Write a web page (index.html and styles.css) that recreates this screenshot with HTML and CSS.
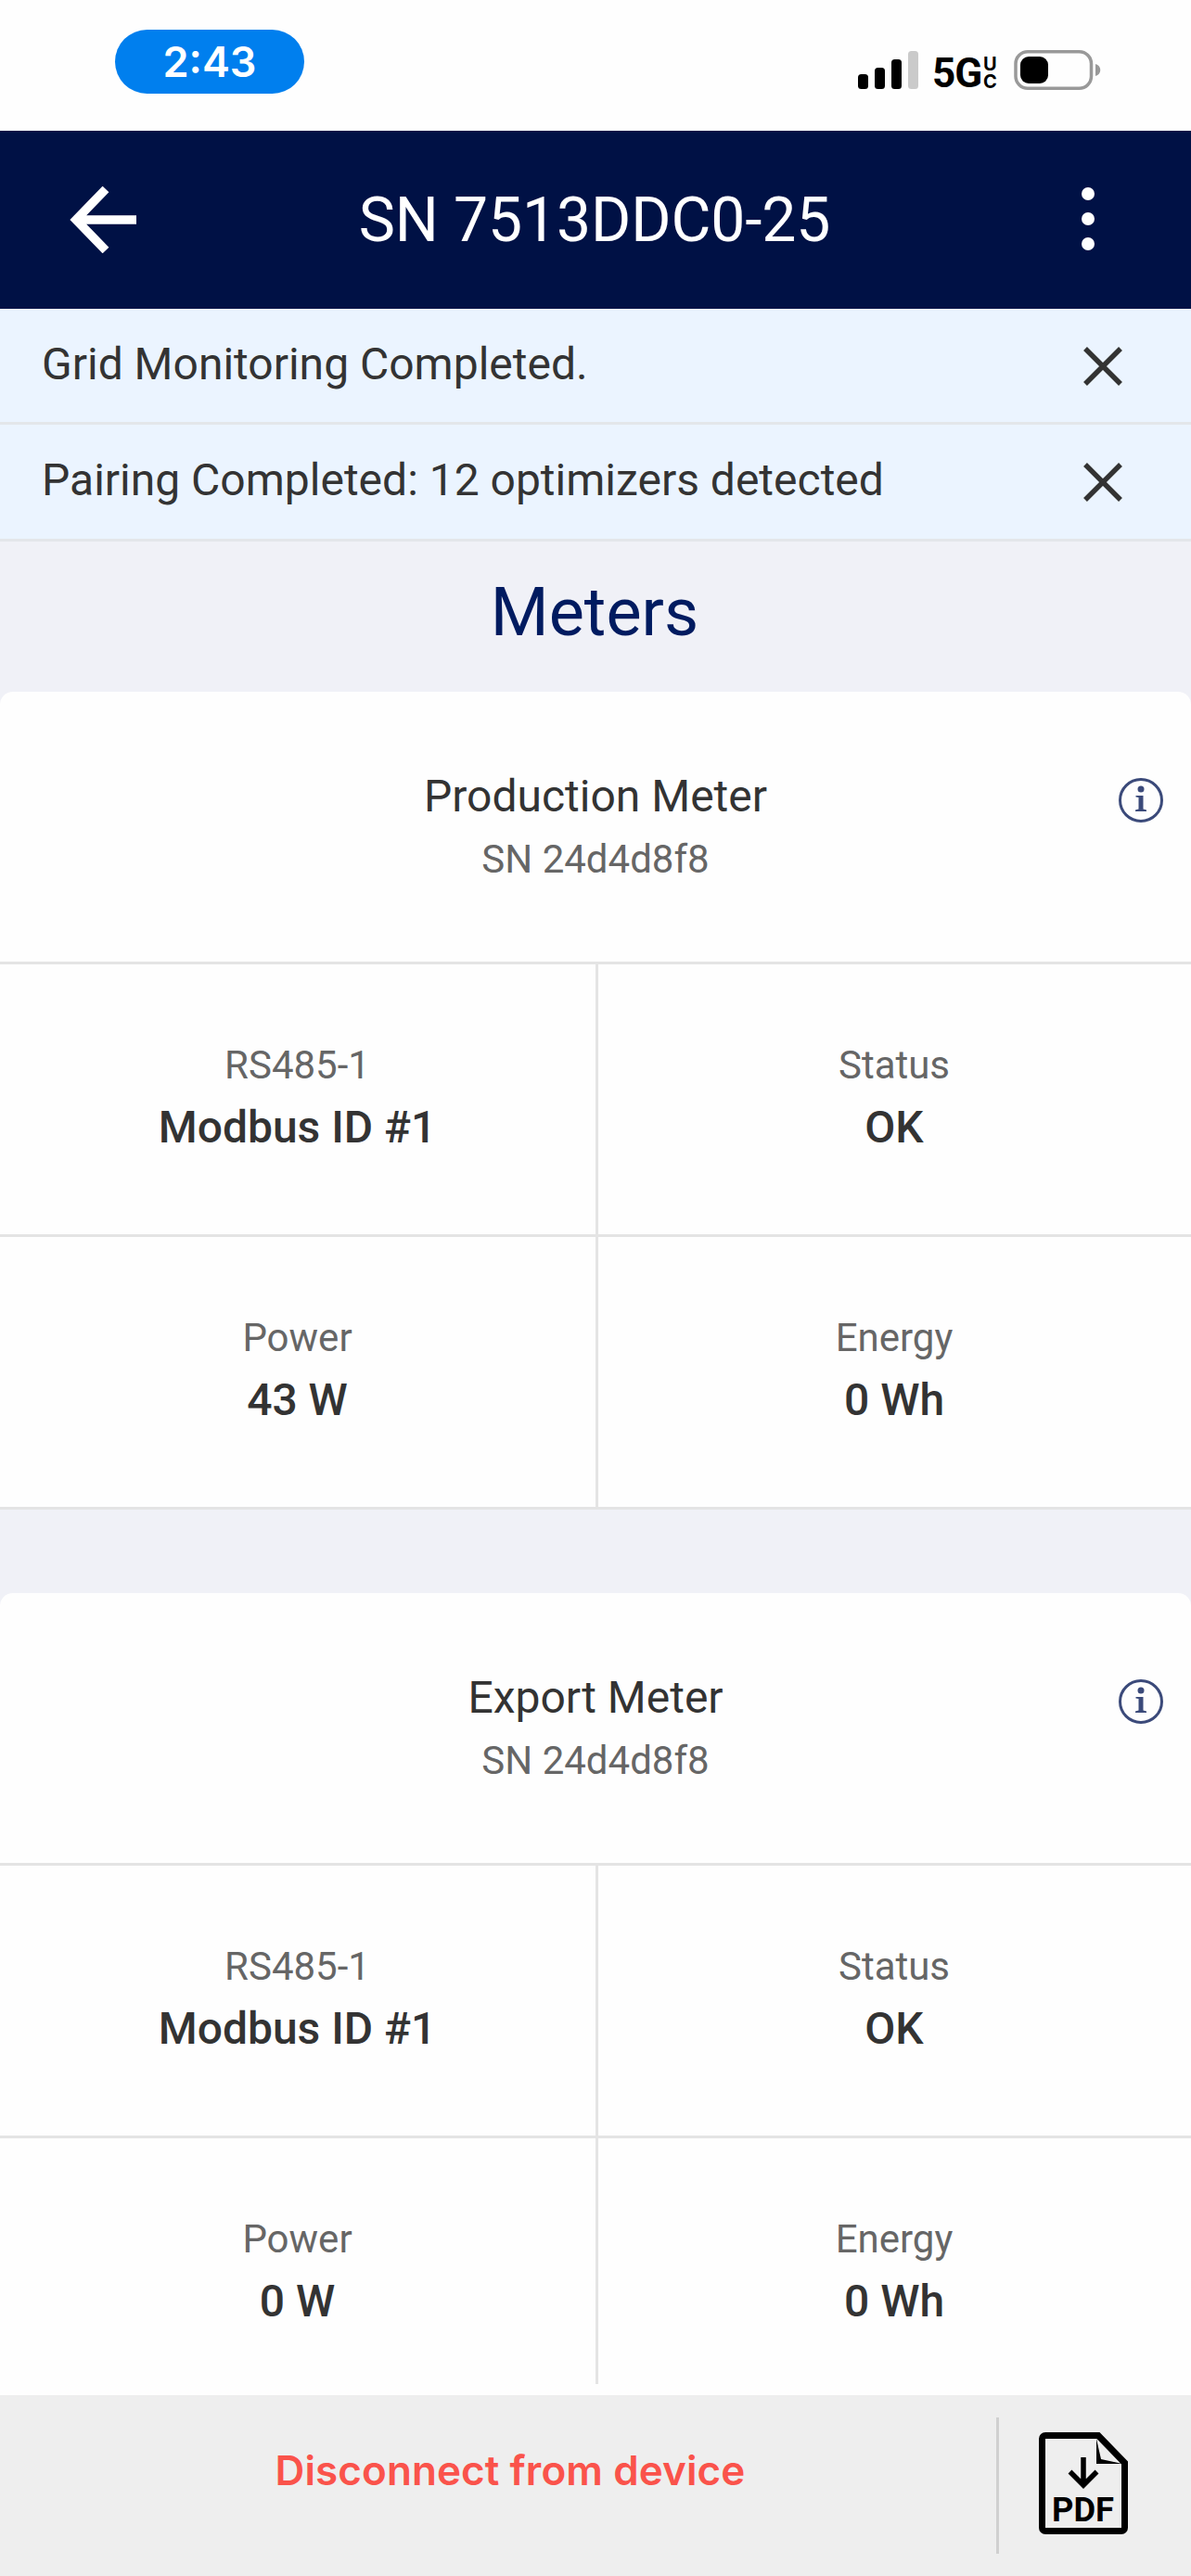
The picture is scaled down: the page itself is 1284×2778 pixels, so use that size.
FILE: index.html
```html
<!DOCTYPE html>
<html lang="en">
  <head>
    <meta charset="UTF-8" />
    <meta name="viewport" content="width=device-width, initial-scale=1.0" />
    <title>Meters</title>
    <link rel="stylesheet" href="styles.css">
  </head>
  <body>
    <div class="status-bar">
      <div class="clock">2:43</div>
      <svg class="status-icons" width="264" height="52" viewBox="0 0 264 52">
        <!-- signal -->
        <rect x="1" y="26" width="11" height="16" rx="3.5" />
        <rect x="19" y="19" width="11" height="23" rx="3.5" />
        <rect x="37" y="10" width="11" height="32" rx="3.5" />
        <rect x="55" y="1" width="11" height="41" rx="3.5" fill="#cacaca" />
        <!-- network -->
        <text class="net" x="81" y="40">5G</text>
        <text class="net-small" x="136" y="22">U</text>
        <text class="net-small" x="136" y="40.5">C</text>
        <!-- battery -->
        <rect x="171" y="1.8" width="81.500" height="39.500" rx="13" fill="none" stroke="#999" stroke-width="3.500" />
        <rect x="176" y="7" width="30" height="29" rx="9" />
        <path d="M257 15c7 2 7 11 0 13z" fill="#999" />
      </svg>
    </div>

    <header class="header">
      <svg class="back" width="72" height="72" viewBox="0 0 72 72">
        <path d="M39 3 7 36l32 33M7 36h65" fill="none" stroke="#fff" stroke-width="9.500" />
      </svg>
      <h1>SN 7513DDC0-25</h1>
      <svg class="more" width="14" height="68" viewBox="0 0 14 68">
        <circle cx="7" cy="7" r="7" />
        <circle cx="7" cy="34" r="7" />
        <circle cx="7" cy="61" r="7" />
      </svg>
    </header>

    <div class="alert">
      <p>Grid Monitoring Completed.</p>
      <svg class="close" width="42" height="42" viewBox="0 0 42 42">
        <path d="m2 2 38 38M40 2 2 40" />
      </svg>
    </div>
    <div class="alert alert-last">
      <p>Pairing Completed: 12 optimizers detected</p>
      <svg class="close" width="42" height="42" viewBox="0 0 42 42">
        <path d="m2 2 38 38M40 2 2 40" />
      </svg>
    </div>

    <main class="content">
      <h2>Meters</h2>

      <section class="card">
        <div class="card-header">
          <div class="card-title">
            <h3>Production Meter</h3>
            <p>SN 24d4d8f8</p>
          </div>
          <svg class="info" width="48" height="48" viewBox="0 0 48 48">
            <circle cx="24" cy="24" r="22.500" fill="none" stroke="#3b4a7a" stroke-width="3" />
            <circle cx="24" cy="12" r="3.500" />
            <path d="M18.500 19h8v14.500l3.500 1v1.500H18v-1.500l3.500-1V21l-3-.5z" />
          </svg>
        </div>
        <div class="grid">
          <div class="cell"><span>RS485-1</span><b>Modbus ID #1</b></div>
          <div class="cell"><span>Status</span><b>OK</b></div>
          <div class="cell"><span>Power</span><b>43 W</b></div>
          <div class="cell"><span>Energy</span><b>0 Wh</b></div>
        </div>
      </section>

      <section class="card card-cut">
        <div class="card-header">
          <div class="card-title">
            <h3>Export Meter</h3>
            <p>SN 24d4d8f8</p>
          </div>
          <svg class="info" width="48" height="48" viewBox="0 0 48 48">
            <circle cx="24" cy="24" r="22.500" fill="none" stroke="#3b4a7a" stroke-width="3" />
            <circle cx="24" cy="12" r="3.500" />
            <path d="M18.500 19h8v14.500l3.500 1v1.500H18v-1.500l3.500-1V21l-3-.5z" />
          </svg>
        </div>
        <div class="grid">
          <div class="cell"><span>RS485-1</span><b>Modbus ID #1</b></div>
          <div class="cell"><span>Status</span><b>OK</b></div>
          <div class="cell"><span>Power</span><b>0 W</b></div>
          <div class="cell"><span>Energy</span><b>0 Wh</b></div>
        </div>
      </section>
    </main>

    <footer class="footer">
      <div class="disconnect">Disconnect from device</div>
      <div class="pdf">
        <svg width="96" height="110" viewBox="0 0 96 110">
          <path d="M7 3.500h57L92.500 33v70a3.500 3.500 0 0 1-3.500 3.500H7a3.500 3.500 0 0 1-3.500-3.500V7A3.500 3.500 0 0 1 7 3.500z" fill="none" stroke="#000" stroke-width="7" />
          <path d="M62 7v27h28l-23-5z" />
          <path d="M48 27v30M33.500 42.500 48 57l14.500-14.500" fill="none" stroke="#000" stroke-width="5.500" />
          <text class="pdf-text" x="14" y="96" textLength="67" lengthAdjust="spacingAndGlyphs">PDF</text>
        </svg>
      </div>
    </footer>
  </body>
</html>
```
FILE: styles.css
```css
* {
  box-sizing: border-box;
}

body {
  margin: 0;
  height: 2778px;
  display: flex;
  flex-direction: column;
  overflow: hidden;
  background-color: #fefefe;
  color: #333;
  font-family: Roboto, sans-serif;
}

h1, h2, h3, p {
  margin: 0;
  font-weight: 400;
}

svg {
  display: block;
  flex: none;
}

.status-bar {
  display: flex;
  justify-content: space-between;
  align-items: flex-start;
  height: 141px;
  padding: 32px 96px 0 124px;
}

.clock {
  width: 204px;
  height: 69px;
  border-radius: 35px;
  background-color: #007fee;
  color: #fff;
  font: 600 45px/70px Inter, sans-serif;
  text-align: center;
}

.status-icons {
  margin-top: 22px;
}

.net {
  font: 700 44px Roboto, sans-serif;
  letter-spacing: -1px;
}

.net-small {
  font: 700 20px Inter, sans-serif;
}

.header {
  display: grid;
  grid-template-columns: 1fr auto 1fr;
  align-items: center;
  height: 192px;
  padding: 0 75px;
  background-color: #001145;
  color: #fff;
}

.header h1 {
  margin-right: 2px;
  font-size: 66px;
  letter-spacing: -0.1px;
}

.more {
  justify-self: end;
  margin: 0 29px 2px 0;
  fill: #fff;
}

.alert {
  display: flex;
  justify-content: space-between;
  align-items: center;
  height: 125px;
  padding: 0 74px 4px 45px;
  background-color: #ebf4ff;
  border-bottom: 3px solid #e3e6ea;
  font-size: 48px;
}

.alert-last {
  height: 126px;
}

.close {
  margin-top: 5px;
  fill: none;
  stroke: #333;
  stroke-width: 5.5;
}

.content {
  height: 1999px;
  overflow: hidden;
  background-color: #f0f1f7;
}

.content h2 {
  height: 162px;
  padding-right: 2px;
  line-height: 153px;
  color: #001b60;
  font-size: 72px;
  text-align: center;
}

.card {
  margin-bottom: 90px;
  border-radius: 14px 14px 0 0;
  background-color: #fefefe;
}

.card-header {
  display: grid;
  grid-template-columns: 1fr auto 1fr;
  height: 294px;
  padding: 77px 30px 0;
  border-bottom: 3px solid #e4e4e4;
  text-align: center;
}

.card-title {
  grid-column: 2;
}

.card-title h3 {
  margin-bottom: 4px;
  font-size: 48px;
  line-height: 72px;
}

.card-title p {
  color: #666;
  font-size: 42px;
  line-height: 56px;
}

.info {
  justify-self: end;
  margin-top: 16px;
  fill: #3b4a7a;
}

.grid {
  display: grid;
  grid-template-columns: 645px 1fr;
}

.cell {
  display: flex;
  flex-direction: column;
  align-items: center;
  gap: 3px;
  height: 294px;
  padding: 81px 1px 0 0;
  border-bottom: 3px solid #e4e4e4;
}

.cell:nth-child(odd) {
  border-right: 3px solid #e4e4e4;
}

.cell span {
  color: #666;
  font-size: 42px;
  line-height: 56px;
}

.cell b {
  font-size: 48px;
  font-weight: 500;
  line-height: 72px;
}

/* last row runs under the footer */
.card-cut {
  margin-bottom: 0;
  padding-bottom: 12px;
}

.card-cut .cell:nth-child(n + 3) {
  height: 265px;
  border-bottom: none;
}

.footer {
  display: flex;
  height: 195px;
  padding-top: 24px;
  background-color: #eee;
}

.disconnect {
  width: 1074px;
  padding-left: 26px;
  color: #fa534b;
  font: 600 44px/114px Inter, sans-serif;
  letter-spacing: 0.1px;
  text-align: center;
}

.pdf {
  height: 147px;
  padding: 16px 0 0 43px;
  border-left: 3px solid #d0d0d0;
}

.pdf-text {
  font: 700 36px Roboto, sans-serif;
}
```
